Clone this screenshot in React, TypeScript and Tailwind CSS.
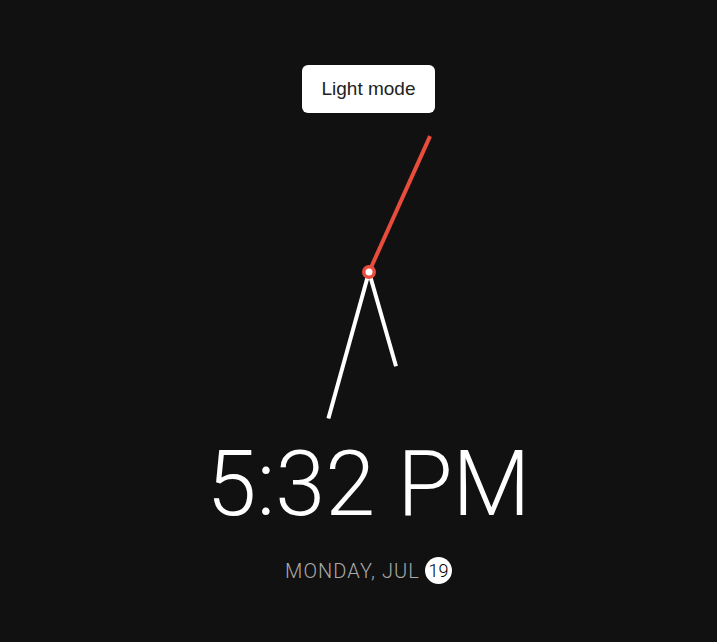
export default function App() {
  const cx = 159;
  const cy = 159;
  const hand = (deg: number, len: number) => {
    const r = (deg * Math.PI) / 180;
    return { x: cx + Math.sin(r) * len, y: cy - Math.cos(r) * len };
  };
  const hour = hand(164, 98);
  const minute = hand(195.5, 152);
  const second = hand(24.2, 149);

  return (
    <div className="min-h-screen w-full bg-[#111111] flex flex-col items-center pt-[65px] pl-[20px]">
      <button className="h-[48px] px-[19px] rounded-[6px] bg-white text-[#222] text-[19px] font-['Liberation_Sans',Arial,sans-serif]">
        Light mode
      </button>

      <svg width="318" height="318" viewBox="0 0 318 318" className="block">
        <line x1={cx} y1={cy} x2={minute.x} y2={minute.y} stroke="#ffffff" strokeWidth="4" />
        <line x1={cx} y1={cy} x2={hour.x} y2={hour.y} stroke="#ffffff" strokeWidth="4" />
        <line x1={cx} y1={cy} x2={second.x} y2={second.y} stroke="#e74c3c" strokeWidth="4" />
        <circle cx={cx} cy={cy} r="7" fill="#e74c3c" />
        <circle cx={cx} cy={cy} r="3.5" fill="#ffffff" />
      </svg>

      <div className="mt-[9px] text-white text-[90px] leading-none font-light font-['Roboto',sans-serif]">
        5:32 PM
      </div>

      <div className="mt-[27px] flex items-center gap-[5px] font-['Roboto',sans-serif] font-light">
        <span className="text-[#aaaaaa] text-[20px] leading-none tracking-[1.1px] uppercase">Monday, Jul</span>
        <span className="w-[27px] h-[27px] rounded-full bg-white text-black text-[18px] flex items-center justify-center">
          19
        </span>
      </div>
    </div>
  );
}
